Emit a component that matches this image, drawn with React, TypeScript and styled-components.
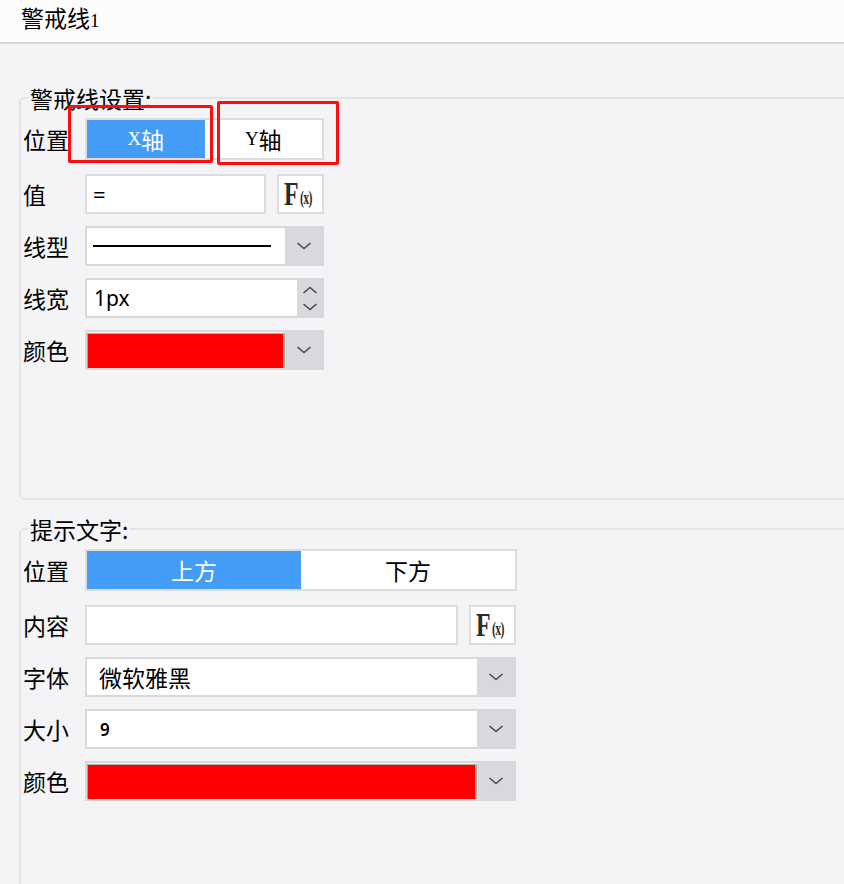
import React from "react";
import styled, { createGlobalStyle } from "styled-components";

const Global = createGlobalStyle`
  html, body { margin: 0; padding: 0; background: #f4f4f6; }
  body { font-family: "Noto Sans CJK SC", "Noto Sans", sans-serif; color: #000; }
  * { box-sizing: border-box; }
`;

const Page = styled.div`
  position: relative;
  width: 844px;
  height: 884px;
  overflow: hidden;
  background: #f4f4f6;
`;

const Header = styled.header`
  height: 44px;
  background: #fcfcfc;
  border-bottom: 2px solid #d8d8db;
  padding-left: 21px;
  font-size: 23px;
  line-height: 34px;
`;

const Body = styled.main`
  padding-top: 41px;
`;

const Group = styled.fieldset<{ $gap?: number }>`
  margin: ${(p) => p.$gap ?? 0}px -40px 0 19px;
  min-width: 0;
  padding: 7px 0 0 1px;
  border: 2px solid #e4e4e7;
  border-radius: 6px;
`;

const Legend = styled.legend`
  margin-left: 6px;
  padding: 0 2px;
  font-size: 23px;
  line-height: 26px;
`;

const Content = styled.div<{ $h: number }>`
  height: ${(p) => p.$h}px;
  display: flex;
  flex-direction: column;
  gap: 12px;
`;

const Row = styled.div<{ $tall?: boolean }>`
  display: flex;
  align-items: center;
  height: ${(p) => (p.$tall ? 42 : 40)}px;
  margin-bottom: ${(p) => (p.$tall ? 2 : 0)}px;
`;

const Label = styled.span`
  width: 63px;
  flex: none;
  font-size: 23px;
  line-height: 1;
  padding-left: 1px;
`;

const Segmented = styled.div<{ $w: number }>`
  display: flex;
  width: ${(p) => p.$w}px;
  height: 42px;
  border: 2px solid #dcdcdf;
  background: #fff;
`;

const Seg = styled.div<{ $active?: boolean }>`
  flex: 1;
  display: flex;
  align-items: center;
  justify-content: center;
  font-size: 23px;
  background: ${(p) => (p.$active ? "#439cf6" : "#fff")};
  color: ${(p) => (p.$active ? "#fff" : "#000")};
`;

const Latin = styled.span`
  font-family: "Liberation Serif", "DejaVu Serif", serif;
  font-size: 19px;
`;

const Input = styled.div<{ $w: number; $size?: number; $pad?: number }>`
  width: ${(p) => p.$w}px;
  height: 40px;
  border: 2px solid #dcdcdf;
  background: #fff;
  display: flex;
  align-items: center;
  padding-left: ${(p) => p.$pad ?? 6}px;
  font-family: "Noto Sans", "Noto Sans CJK SC", sans-serif;
  font-size: ${(p) => p.$size ?? 21}px;
`;

const FxButton = styled.div`
  width: 47px;
  height: 40px;
  margin-left: 11px;
  border: 2px solid #dcdcdf;
  background: #fff;
  display: flex;
  align-items: center;
  justify-content: center;
  color: #2a2a2a;
  font-family: "Liberation Serif", "DejaVu Serif", serif;
  padding-right: 2px;
`;

const FxF = styled.span`
  display: inline-block;
  font-size: 34px;
  font-weight: bold;
  line-height: 1;
  width: 16px;
  transform: scaleX(0.7);
  transform-origin: left center;
`;

const FxX = styled.span`
  display: inline-block;
  font-size: 19px;
  font-weight: bold;
  line-height: 1;
  margin-top: 6px;
  width: 16px;
  letter-spacing: -1px;
  transform: scaleX(0.62);
  transform-origin: left center;
`;

const Select = styled.div<{ $w: number }>`
  width: ${(p) => p.$w}px;
  height: 40px;
  border: 2px solid #d9d9dc;
  display: flex;
`;

const Field = styled.div<{ $pad?: number; $size?: number; $cjk?: boolean; $bold?: boolean }>`
  flex: 1;
  background: #fff;
  display: flex;
  align-items: center;
  padding-left: ${(p) => p.$pad ?? 6}px;
  font-family: ${(p) =>
    p.$cjk ? `"Noto Sans CJK SC", sans-serif` : `"Noto Sans", "DejaVu Sans", sans-serif`};
  font-size: ${(p) => p.$size ?? 21}px;
  font-weight: ${(p) => (p.$bold ? 600 : 400)};
`;

const LineSample = styled.div`
  width: 178px;
  height: 2px;
  background: #000;
`;

const Swatch = styled.div`
  flex: 1;
  margin: 1px 0 0;
  background: #ff0000;
  border-left: 1px solid #a3a3a3;
  border-right: 2px solid #a8a8a8;
  border-top: 1px solid #b0b0b0;
`;

const ArrowBox = styled.div<{ $w?: number }>`
  width: ${(p) => p.$w ?? 37}px;
  flex: none;
  background: #d8d9dc;
  display: flex;
  flex-direction: column;
  align-items: center;
  justify-content: center;
  gap: 9px;
`;

const Mark = styled.div<{ $x: number; $y: number; $w: number; $h: number }>`
  position: absolute;
  left: ${(p) => p.$x}px;
  top: ${(p) => p.$y}px;
  width: ${(p) => p.$w}px;
  height: ${(p) => p.$h}px;
  border: 3px solid #ff0d0d;
  border-radius: 2px;
  pointer-events: none;
`;

const Chevron = ({ up }: { up?: boolean }) => (
  <svg width="16" height="8" viewBox="0 0 16 8">
    <polyline
      points={up ? "1.5,7 8,1.5 14.5,7" : "1.5,1 8,6.5 14.5,1"}
      fill="none"
      stroke="#4a4a4a"
      strokeWidth="1.6"
    />
  </svg>
);

const Fx = () => (
  <FxButton>
    <FxF>F</FxF>
    <FxX>(x)</FxX>
  </FxButton>
);

export default function App() {
  return (
    <Page>
      <Global />
      <Header>
        警戒线<Latin>1</Latin>
      </Header>
      <Body>
        <Group>
          <Legend>警戒线设置:</Legend>
          <Content $h={380}>
            <Row $tall>
              <Label>位置</Label>
              <Segmented $w={239}>
                <Seg $active>
                  <Latin>X</Latin>轴
                </Seg>
                <Seg>
                  <Latin>Y</Latin>轴
                </Seg>
              </Segmented>
            </Row>
            <Row>
              <Label>值</Label>
              <Input $w={181} $size={22}>=</Input>
              <Fx />
            </Row>
            <Row>
              <Label>线型</Label>
              <Select $w={239}>
                <Field>
                  <LineSample />
                </Field>
                <ArrowBox>
                  <Chevron />
                </ArrowBox>
              </Select>
            </Row>
            <Row>
              <Label>线宽</Label>
              <Select $w={239}>
                <Field $pad={7}>1px</Field>
                <ArrowBox $w={25}>
                  <Chevron up />
                  <Chevron />
                </ArrowBox>
              </Select>
            </Row>
            <Row>
              <Label>颜色</Label>
              <Select $w={239}>
                <Swatch />
                <ArrowBox>
                  <Chevron />
                </ArrowBox>
              </Select>
            </Row>
          </Content>
        </Group>
        <Group $gap={16}>
          <Legend>提示文字:</Legend>
          <Content $h={400}>
            <Row $tall>
              <Label>位置</Label>
              <Segmented $w={432}>
                <Seg $active>上方</Seg>
                <Seg>下方</Seg>
              </Segmented>
            </Row>
            <Row>
              <Label>内容</Label>
              <Input $w={373} />
              <Fx />
            </Row>
            <Row>
              <Label>字体</Label>
              <Select $w={431}>
                <Field $cjk $pad={12} $size={23}>
                  微软雅黑
                </Field>
                <ArrowBox>
                  <Chevron />
                </ArrowBox>
              </Select>
            </Row>
            <Row>
              <Label>大小</Label>
              <Select $w={431}>
                <Field $pad={13} $size={17} $bold>
                  9
                </Field>
                <ArrowBox>
                  <Chevron />
                </ArrowBox>
              </Select>
            </Row>
            <Row>
              <Label>颜色</Label>
              <Select $w={431}>
                <Swatch />
                <ArrowBox>
                  <Chevron />
                </ArrowBox>
              </Select>
            </Row>
          </Content>
        </Group>
      </Body>
      <Mark $x={68} $y={105} $w={145} $h={58} />
      <Mark $x={217} $y={101} $w={122} $h={64} />
    </Page>
  );
}
